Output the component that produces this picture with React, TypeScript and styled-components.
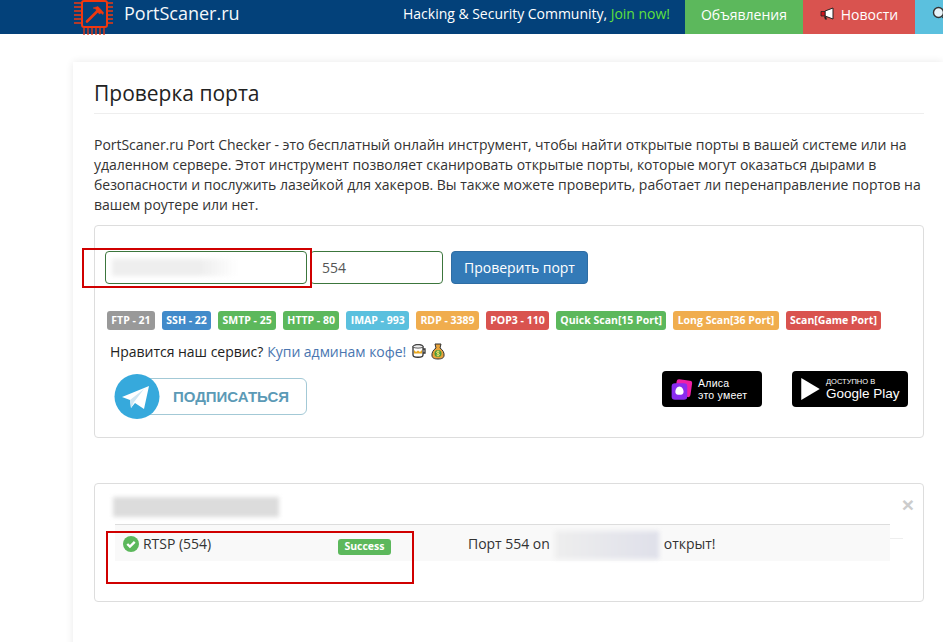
import React from "react";
import styled, { createGlobalStyle } from "styled-components";

const Global = createGlobalStyle`
  html, body { margin: 0; padding: 0; height: 642px; overflow: hidden; background: #fff; }
  body { font-family: "Open Sans", "Liberation Sans", sans-serif; font-size: 14px; color: #222; }
  * { box-sizing: border-box; }
`;

const Page = styled.div`
  position: relative;
  width: 943px;
  height: 642px;
  overflow: hidden;
`;

const Header = styled.header`
  display: flex;
  align-items: stretch;
  height: 34px;
  padding-left: 73px;
  background: #03417a;
  color: #fff;
`;

const Brand = styled.div`
  display: flex;
  align-items: flex-start;
  gap: 11px;
  height: 34px;
`;

const BrandName = styled.span`
  font-size: 18px;
  line-height: 26px;
  color: #f4f8fb;
`;

const Slogan = styled.div`
  margin-left: auto;
  padding-right: 15px;
  font-size: 14px;
  line-height: 28px;
  letter-spacing: -0.02px;
  white-space: nowrap;
`;

const Join = styled.span`
  color: #5fe03c;
`;

const NavButton = styled.div<{ $bg: string; $w: number }>`
  display: flex;
  align-items: center;
  justify-content: center;
  gap: 5px;
  flex: 0 0 ${(p) => p.$w}px;
  min-width: 0;
  height: 34px;
  padding-bottom: 6px;
  font-size: 14px;
  white-space: nowrap;
  overflow: hidden;
  background: ${(p) => p.$bg};
`;

const SearchButton = styled(NavButton)`
  justify-content: flex-start;
  padding-left: 17px;
  svg { flex: none; }
`;

const Panel = styled.main`
  margin: 28px 0 0 73px;
  height: 620px;
  padding: 18px 19px 0 21px;
  background: #fff;
  box-shadow: 0 0 8px rgba(0, 0, 0, 0.09);
`;

const Title = styled.h1`
  margin: 0 0 21px;
  padding-bottom: 7px;
  height: 34px;
  font-size: 21px;
  line-height: 26px;
  font-weight: 400;
  color: #222;
  border-bottom: 1px solid #eee;
`;

const Intro = styled.p`
  margin: 0 0 10px;
  font-size: 14px;
  line-height: 20px;
  letter-spacing: -0.03px;
  color: #333;
`;

const Box = styled.section`
  position: relative;
  border: 1px solid #ddd;
  border-radius: 4px;
  background: #fff;
`;

const CheckBox = styled(Box)`
  height: 213px;
  padding: 25px 15px 0 10px;
`;

const FormRow = styled.div`
  display: flex;
  align-items: center;
  height: 33px;
`;

const Field = styled.div<{ $w: number; $mr: number }>`
  display: flex;
  align-items: center;
  width: ${(p) => p.$w}px;
  height: 33px;
  margin-right: ${(p) => p.$mr}px;
  padding: 0 11px;
  border: 1px solid #3c763d;
  border-radius: 4px;
  font-size: 14px;
  color: #555;
`;

const Smudge = styled.div<{ $w: number; $h: number; $bg: string }>`
  width: ${(p) => p.$w}px;
  height: ${(p) => p.$h}px;
  background: ${(p) => p.$bg};
  filter: blur(2px);
  flex: none;
`;

const FieldSmudge = styled(Smudge)`
  margin-left: -5px;
`;

const SubmitButton = styled.button`
  width: 137px;
  height: 33px;
  padding: 0;
  border: 1px solid #2e6da4;
  border-radius: 4px;
  background: #337ab7;
  color: #fff;
  font-family: inherit;
  font-size: 14px;
  letter-spacing: -0.03px;
`;

const Labels = styled.div`
  display: flex;
  gap: 7px;
  margin: 27px 0 0 2px;
`;

const Label = styled.span<{ $bg: string }>`
  display: inline-block;
  height: 19px;
  padding: 0 4.35px;
  border-radius: 3px;
  background: ${(p) => p.$bg};
  color: #fff;
  font-size: 10.5px;
  line-height: 18px;
  font-weight: 700;
  white-space: nowrap;
`;

const Support = styled.div`
  display: flex;
  align-items: center;
  gap: 4px;
  margin: 11px 0 0 5px;
  height: 20px;
  font-size: 14px;
  letter-spacing: -0.03px;
  color: #222;
`;

const CoffeeLink = styled.a`
  color: #4a76b0;
  text-decoration: none;
`;

const PromoRow = styled.div`
  display: flex;
  align-items: flex-start;
  margin: 13px 0 0 8px;
`;

const Subscribe = styled.div`
  position: relative;
  display: flex;
  align-items: center;
  width: 194px;
  height: 45px;
  padding-left: 46px;
`;

const SubscribePill = styled.div`
  display: flex;
  align-items: center;
  justify-content: center;
  width: 162px;
  height: 37px;
  margin-left: -14px;
  padding-left: 10px;
  border: 1px solid #a3c9d6;
  border-radius: 6px;
  color: #5b9ab6;
  font-family: "Liberation Sans", sans-serif;
  font-size: 15px;
  font-weight: 700;
`;

const TelegramIcon = styled.svg`
  position: absolute;
  left: 1px;
  top: 0;
`;

const StoreBadge = styled.div<{ $w: number; $ml: number }>`
  display: flex;
  align-items: center;
  width: ${(p) => p.$w}px;
  height: 36px;
  margin-left: ${(p) => p.$ml}px;
  margin-top: -3px;
  padding-left: 8px;
  gap: 5px;
  border-radius: 4px;
  background: #000;
  color: #fff;
`;

const AliceText = styled.div`
  font-family: "Liberation Sans", sans-serif;
  font-size: 10.5px;
  line-height: 12.5px;
  letter-spacing: 0.25px;
`;

const PlayText = styled.div`
  display: flex;
  flex-direction: column;
  font-family: "Liberation Sans", sans-serif;
`;

const PlaySmall = styled.span`
  font-size: 7.5px;
  line-height: 9px;
`;

const PlayBig = styled.span`
  font-size: 13.5px;
  line-height: 16px;
`;

const ResultBox = styled(Box)`
  height: 119px;
  margin-top: 45px;
  padding: 13px 0 0 18px;
`;

const HostSmudge = styled(Smudge)`
  margin-bottom: 7px;
`;

const CloseMark = styled.span`
  position: absolute;
  top: 7px;
  right: 9px;
  font-family: "Liberation Sans", sans-serif;
  font-size: 21px;
  line-height: 28px;
  font-weight: 700;
  color: #ccc;
`;

const RowWrap = styled.div`
  position: relative;
  width: 775px;
  margin-left: 2px;
`;

const TailRule = styled.div`
  position: absolute;
  left: 775px;
  top: 14px;
  width: 13px;
  height: 1px;
  background: #eee;
`;

const ResultRow = styled.div`
  display: grid;
  grid-template-columns: 223px 130px 1fr;
  align-items: start;
  height: 37px;
  padding-top: 5px;
  border-top: 1px solid #ddd;
  background: #f9f9f9;
  font-size: 14px;
  line-height: 20px;
  letter-spacing: -0.03px;
  color: #333;
`;

const ServiceCell = styled.div`
  display: flex;
  align-items: center;
  gap: 4px;
  padding: 5px 0 0 8px;
  height: 22px;
`;

const StatusCell = styled.div`
  padding-top: 5px;
`;

const StatusLabel = styled(Label)`
  height: 16px;
  padding: 0 6.5px;
  line-height: 15px;
`;

const MessageCell = styled.div`
  display: flex;
  align-items: flex-start;
  gap: 5px;
  padding-top: 4px;
  white-space: nowrap;
`;

const IpSmudge = styled(Smudge)`
  margin: 0;
  transform: translateY(-3px);
`;

const Annotation = styled.div<{ $x: number; $y: number; $w: number; $h: number }>`
  position: absolute;
  left: ${(p) => p.$x}px;
  top: ${(p) => p.$y}px;
  width: ${(p) => p.$w}px;
  height: ${(p) => p.$h}px;
  border: 2px solid #d00000;
  pointer-events: none;
`;

const Logo = () => (
  <svg width="40" height="36" viewBox="0 0 40 36" fill="none" stroke="#f0380f">
    <rect x="9" y="1" width="25" height="26" rx="2" strokeWidth="2" />
    <path strokeWidth="1.3" d="M1 3h7M1 7h7M1 11h7M1 15h7M1 19h7M1 23h7M35 3h6M35 7h6M35 11h6M35 15h6M35 19h6M35 23h6" />
    <path strokeWidth="1.3" d="M11 28v7M15 28v7M19 28v7M23 28v7M27 28v7M31 28v7" />
    <path strokeWidth="2.6" strokeLinecap="round" d="M14 21.500L24 11.500" />
    <path fill="#f0380f" strokeWidth="0.5" d="M20 8l5-1.500 5.500 6-.5 2-2-1.500-1.500 1-3-3-.5-2z" />
  </svg>
);

const Megaphone = () => (
  <svg width="16" height="14" viewBox="0 0 16 14">
    <path fill="#fff" stroke="#222" strokeWidth="1" d="M5 4l8-3v11L5 9z" />
    <path fill="#d0121b" stroke="#222" strokeWidth="0.8" d="M1 4.500h4v4.500H1z" />
    <path fill="#222" d="M4 9.500h2l1 3H5z" />
  </svg>
);

const Search = () => (
  <svg width="16" height="16" viewBox="0 0 16 16" fill="none">
    <circle cx="6.500" cy="6.500" r="5" fill="#e7f3f8" stroke="#333" strokeWidth="1.400" />
    <path stroke="#333" strokeWidth="2" d="M10.500 10.500l4 4" />
  </svg>
);

const Mug = () => (
  <svg width="17" height="17" viewBox="0 0 17 17">
    <path fill="#fff" stroke="#333" strokeWidth="1.300" d="M3 4c0-3 10-3 10 0v8c0 3-10 3-10 0z" />
    <path fill="#e9a820" d="M4 7l2 2 2-1.500 2 1.500 2-2v3.500H4z" />
    <path fill="none" stroke="#333" strokeWidth="1.300" d="M13 6h2v4h-2" />
    <path fill="#eee" stroke="#333" strokeWidth="0.800" d="M2.500 4c2-3 9-3 11 0-3 1.500-8 1.500-11 0z" />
  </svg>
);

const MoneyBag = () => (
  <svg width="14" height="17" viewBox="0 0 14 17">
    <path fill="#e8a33a" stroke="#333" strokeWidth="1" d="M4 1h6L9 5c3 2 4.500 5 4 8-.5 2-2 3-6 3s-5.500-1-6-3c-.5-3 1-6 4-8z" />
    <circle cx="7" cy="10.500" r="3.500" fill="#4a9a3a" />
    <path fill="none" stroke="#f5e26a" strokeWidth="1" d="M8.500 9c-1-1-3-.7-3 .5s3 .8 3 2-2 1.500-3 .5M7 7.500v6" />
  </svg>
);

const Telegram = () => (
  <TelegramIcon width="46" height="45" viewBox="0 0 46 45">
    <circle cx="23" cy="22.500" r="22.500" fill="#36a9dc" />
    <path fill="#fff" d="M8 23L35 12l-5 23-9-6-4 5-1-8z" />
    <path fill="#cfe6f2" d="M16 26l14-11-10 13-3 6z" />
  </TelegramIcon>
);

const Alice = () => (
  <svg width="23" height="24" viewBox="0 0 28 28">
    <rect x="7" y="3" width="19" height="20" rx="3" fill="#ef1fa8" transform="rotate(8 16 13)" />
    <rect x="2" y="7" width="19" height="20" rx="4" fill="#8a2cf0" />
    <path fill="#fff" d="M11.500 11c3 0 5 3.500 5 6.500 0 2.500-2 3.500-5 3.500s-5-1-5-3.500c0-3 2-6.500 5-6.500z" />
  </svg>
);

const Play = () => (
  <svg width="21" height="24" viewBox="0 0 22 26">
    <path fill="#fff" d="M1 1l20 12L1 25z" />
  </svg>
);

const Check = () => (
  <svg width="16" height="16" viewBox="0 0 15 15">
    <circle cx="7.500" cy="7.500" r="7.500" fill="#5cb85c" />
    <path fill="none" stroke="#fff" strokeWidth="2.200" d="M4 7.500l2.500 2.500L11 5.500" />
  </svg>
);

const ports: [string, string][] = [
  ["FTP - 21", "#999999"],
  ["SSH - 22", "#428bca"],
  ["SMTP - 25", "#5cb85c"],
  ["HTTP - 80", "#5cb85c"],
  ["IMAP - 993", "#5bc0de"],
  ["RDP - 3389", "#f0ad4e"],
  ["POP3 - 110", "#d9534f"],
  ["Quick Scan[15 Port]", "#5cb85c"],
  ["Long Scan[36 Port]", "#f0ad4e"],
  ["Scan[Game Port]", "#d9534f"],
];

export default function App() {
  return (
    <Page>
      <Global />
      <Header>
        <Brand>
          <Logo />
          <BrandName>PortScaner.ru</BrandName>
        </Brand>
        <Slogan>
          Hacking &amp; Security Community, <Join>Join now!</Join>
        </Slogan>
        <NavButton $bg="#5cb85c" $w={118}>Объявления</NavButton>
        <NavButton $bg="#d9534f" $w={112}>
          <Megaphone /> Новости
        </NavButton>
        <SearchButton $bg="#5bc0de" $w={28}>
          <Search />
        </SearchButton>
      </Header>
      <Panel>
        <Title>Проверка порта</Title>
        <Intro>
          PortScaner.ru Port Checker - это бесплатный онлайн инструмент, чтобы найти открытые порты в вашей системе или на
          удаленном сервере. Этот инструмент позволяет сканировать открытые порты, которые могут оказаться дырами в
          безопасности и послужить лазейкой для хакеров. Вы также можете проверить, работает ли перенаправление портов на
          вашем роутере или нет.
        </Intro>
        <CheckBox>
          <FormRow>
            <Field $w={202} $mr={3}>
              <FieldSmudge $w={126} $h={17} $bg="linear-gradient(90deg, #eeeeee 70%, rgba(238, 238, 238, 0))" />
            </Field>
            <Field $w={133} $mr={8}>554</Field>
            <SubmitButton>Проверить порт</SubmitButton>
          </FormRow>
          <Labels>
            {ports.map(([text, color]) => (
              <Label key={text} $bg={color}>{text}</Label>
            ))}
          </Labels>
          <Support>
            <span>Нравится наш сервис?</span>
            <CoffeeLink>Купи админам кофе!</CoffeeLink>
            <Mug />
            <MoneyBag />
          </Support>
          <PromoRow>
            <Subscribe>
              <Telegram />
              <SubscribePill>ПОДПИСАТЬСЯ</SubscribePill>
            </Subscribe>
            <StoreBadge $w={100} $ml={355}>
              <Alice />
              <AliceText>
                Алиса
                <br />
                это умеет
              </AliceText>
            </StoreBadge>
            <StoreBadge $w={116} $ml={30}>
              <Play />
              <PlayText>
                <PlaySmall>ДОСТУПНО В</PlaySmall>
                <PlayBig>Google Play</PlayBig>
              </PlayText>
            </StoreBadge>
          </PromoRow>
        </CheckBox>
        <ResultBox>
          <HostSmudge $w={166} $h={20} $bg="#dcdcdc" />
          <CloseMark>×</CloseMark>
          <RowWrap>
            <TailRule />
            <ResultRow>
              <ServiceCell>
                <Check />
                <span>RTSP (554)</span>
              </ServiceCell>
              <StatusCell>
                <StatusLabel $bg="#5cb85c">Success</StatusLabel>
              </StatusCell>
              <MessageCell>
                <span>Порт 554 on</span>
                <IpSmudge $w={104} $h={28} $bg="linear-gradient(90deg, #eeeeee, #dfe0ea)" />
                <span>открыт!</span>
              </MessageCell>
            </ResultRow>
          </RowWrap>
        </ResultBox>
      </Panel>
      <Annotation $x={82} $y={248} $w={230} $h={40} />
      <Annotation $x={106} $y={531} $w={308} $h={53} />
    </Page>
  );
}
